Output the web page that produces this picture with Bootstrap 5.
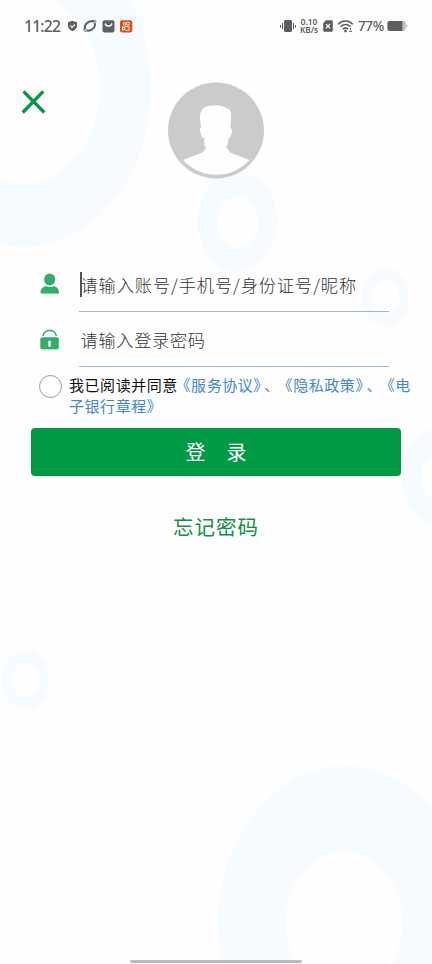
<!DOCTYPE html>
<html lang="zh-CN">
<head>
<meta charset="utf-8">
<meta name="viewport" content="width=device-width, initial-scale=1">
<title>登录</title>
<link rel="stylesheet" href="https://cdn.jsdelivr.net/npm/bootstrap@5.3.0/dist/css/bootstrap.min.css">
<style>
  body { font-family: "Noto Sans", "Noto Sans CJK SC", sans-serif; background: #fefefe; }
  svg { display: block; flex: none; }
  .screen { width: 432px; height: 964px; }
  .backdrop { z-index: 0; }
  .status { height: 52px; padding: 0 24px; color: #5d5d5d; font-family: "Noto Sans", sans-serif; }
  .clock { font-size: 15.6px; font-weight: 500; line-height: 20px; width: 43px; letter-spacing: -.75px; }
  .rate { font-size: 8.3px; line-height: 8px; width: 20px; font-weight: 600; margin-left: 3px; }
  .rate div { height: 8px; }
  .percent { font-size: 13.5px; font-weight: 500; line-height: 20px; width: 25px; letter-spacing: -.4px; }
  .hero { height: 206px; padding: 30px 0 0 20px; }
  .close-btn { margin-top: 6px; }
  .avatar { margin-left: 120px; }
  .login { padding: 0 31px; }
  .field { height: 55px; padding: 0 12px 0 8px; }
  .field-box { margin-left: 18px; height: 57px; margin-top: -1px; }
  .field-input { font-family: "Noto Sans CJK SC", sans-serif; font-weight: 300; font-size: 17.2px; letter-spacing: .7px; height: 55px; padding: 0 0 0 1.5px; border: 0; border-bottom: 1px solid #9cb9ce; border-radius: 0; background: transparent; box-shadow: none; color: #333; outline: 0; }
  .field-input::placeholder { color: #333; opacity: 1; }
  .account { letter-spacing: .92px; }
  .caret { left: 1px; top: 15px; width: 1.5px; height: 25px; background: #555; }
  .agree { padding: 7px 0 0 8px; height: 60px; margin-right: -20px; }
  .agree-text { margin-left: 7px; font-family: "Noto Sans CJK SC", sans-serif; font-size: 15px; line-height: 20.5px; letter-spacing: .55px; color: #111; white-space: nowrap; text-spacing-trim: space-all; font-kerning: none; }
  .agree-text a { color: #4388ce; }
  .open-mark { margin-left: -2.3px; }
  .close-mark { letter-spacing: -4px; }
  .radio-ring { width: 23px; height: 23px; border: 1.5px solid #9b9b9b; margin: 0; background: #fff; }
  .submit { height: 48px; background: #009944; border: 0; border-radius: 4px; color: #fff; font-family: "Noto Sans CJK SC", sans-serif; font-size: 20px; padding: 0; line-height: 48px; gap: 21px; }
  .forgot { margin-top: 35px; color: #118f45; font-family: "Noto Sans CJK SC", sans-serif; font-size: 20.5px; letter-spacing: 1px; line-height: 30px; }
  .home-bar { width: 172px; height: 3px; background: #b9babb; margin-bottom: 1px; }
</style>
</head>
<body>
<div class="screen position-relative overflow-hidden d-flex flex-column">
  <svg class="backdrop position-absolute top-0 start-0" width="432" height="964" aria-hidden="true">
    <g fill="#f5fbff">
      <ellipse cx="24" cy="88" rx="127" ry="159"/><ellipse cx="237.3" cy="221.5" rx="40" ry="50"/><ellipse cx="385.5" cy="297" rx="23.5" ry="29.5"/><ellipse cx="442" cy="477" rx="40" ry="50"/><ellipse cx="25.5" cy="680" rx="23.5" ry="29.5"/><ellipse cx="344.500" cy="924" rx="126.500" ry="158"/>
    </g>
    <g fill="#fefefe">
      <ellipse cx="24" cy="88" rx="76" ry="96"/><ellipse cx="237.500" cy="222" rx="20.500" ry="26"/><ellipse cx="385.500" cy="297" rx="14" ry="17.500"/><ellipse cx="442" cy="477" rx="21" ry="26"/><ellipse cx="25.500" cy="680" rx="14" ry="17.500"/><ellipse cx="344" cy="923.500" rx="58.500" ry="73"/>
    </g>
  </svg>

  <header class="status position-relative d-flex align-items-center justify-content-between">
    <div class="d-flex align-items-center">
      <span class="clock">11:22</span>
      <svg width="11" height="12" viewBox="0 0 11 12"><path d="M5.500 .8 10 2.300V6c0 2.500-2 4-4.500 5.200C3 10 1 8.500 1 6V2.300Z" fill="#606060"/><path d="m3.300 5.700 1.700 1.700 3-3.100" fill="none" stroke="#fff" stroke-width="1.100"/></svg>
      <svg class="ms-1" width="16" height="14" viewBox="0 0 16 14" fill="none" stroke="#606060"><path d="M3 10.500C1.500 6 6 1 12.300 2.500" stroke-width="2"/><path d="M12.500 3.700C14.500 8 9 13 4 11.300" stroke-width="1.900"/><path d="M9 2.100C12 .8 14.300 1.400 14 3.200M2.600 9.500C1.400 11 1.700 12.600 3.800 12.400" stroke-width="1"/></svg>
      <svg class="ms-1" width="13" height="13" viewBox="0 0 13 13"><rect x=".5" y=".3" width="12" height="12.200" rx="2" fill="#5f5f62"/><path d="M3 3.500c1 3.500 6 3.500 7 0" fill="none" stroke="#fff" stroke-width="1.400"/></svg>
      <svg class="ms-1" width="14" height="13" viewBox="0 0 14 13"><rect x="1" y=".3" width="12.300" height="12.200" rx="2" fill="#e84b16"/><g fill="none" stroke="#fff"><circle cx="5.700" cy="3.900" r="1.300"/><circle cx="8.900" cy="3.700" r="1.500"/><rect x="5.700" y="6.600" width="4.500" height="3.700" rx=".8"/><path d="m5.500 7.500-2-.8v3.400l2-.8"/></g></svg>
    </div>
    <div class="d-flex align-items-center">
      <svg width="16" height="14" viewBox="0 0 16 14" fill="#5d5d5d"><rect x="4" y="1" width="8" height="12" rx="1.500"/><path d="M2 4h1v6H2zM0 6h1v2.500H0zM13 4h1v6h-1zM15 6h1v2.500h-1z"/></svg>
      <div class="rate text-center"><div>0.10</div><div>KB/s</div></div>
      <svg class="ms-1" width="10" height="12" viewBox="0 0 10 12"><path d="M3 .2h5.500Q9.800.2 9.800 1.500v9q0 1.300-1.300 1.300h-7Q.2 11.800.2 10.500V3.300Z" fill="#5d5d5d"/><path d="m3 4.200 4 4m0-4-4 4" stroke="#fff" stroke-width="1.300"/></svg>
      <svg class="ms-1" width="17" height="14" viewBox="0 0 17 14" fill="none" stroke="#5d5d5d" stroke-width="1.600"><path d="M1.200 5.200c4-4.200 10.600-4.200 14.600 0M3.500 7.700c3-3 7-3 10 0M5.800 10.200c1.800-1.700 3.600-1.700 5.400 0"/><circle cx="8.500" cy="12" r=".6"/><path d="M12 12.300h3M13.500 9v2" stroke-width="1"/></svg>
      <span class="percent ms-1">77%</span>
      <svg class="ms-1" width="21" height="12" viewBox="0 0 22 12"><rect x=".5" y=".7" width="19" height="10.600" rx="2.500" fill="#bdbdbd"/><path d="M3 .7h13v10.600H3Q.5 11.300.5 8.800V3.200Q.5.7 3 .7" fill="#5d5d5d"/><path d="M20 3.800q1.500 1 1.500 2.200T20 8.200" fill="#bdbdbd"/></svg>
    </div>
  </header>

  <section class="hero position-relative d-flex align-items-start">
    <button class="close-btn btn p-0 border-0" type="button" aria-label="关闭"><svg width="28" height="28" viewBox="0 0 28 28"><path d="M3.500 3.300 24.300 24.500M23.300 3.300 2.700 24.500" fill="none" stroke="#0b954a" stroke-width="3.300"/></svg></button>
    <svg class="avatar" width="96" height="97" viewBox="0 0 96 97">
      <circle cx="48" cy="48.500" r="48" fill="#cbcbcb"/>
      <path d="M15 78 34.500 70.500 38.500 65.500 36.500 64 36.200 56C34 56 32.500 53 32.300 49L31.800 46.500 33 46 31.900 36C31.800 26 37 23.200 48 23.200 53 23.200 57 24.500 59 26.500 63 27 63.300 31 63.100 37L62.500 46.200 64 47.500C64 52 62.500 55.500 60.500 56.500L59.500 63.500 57.700 65.500 60 67 62 70.500 81.500 78A44.900 44.900 0 0 1 15 78Z" fill="#fefefe"/>
    </svg>
  </section>

  <main class="login position-relative">
    <form>
      <div class="field d-flex">
        <svg class="align-self-center" width="22" height="25" viewBox="0 0 22 25"><ellipse cx="11" cy="20.500" rx="9" ry="2.500" fill="#dff5e9"/><ellipse cx="10.700" cy="6.500" rx="5.600" ry="6" fill="#35ad68"/><path d="M1.500 19.500c0-4 3-6.200 6-6.200q3.300 1.200 6.600 0c3.500 0 5.900 2.700 5.900 6.200 0 1-1 1-1.500 1H3q-1.500 0-1.500-1" fill="#35ad68"/></svg>
        <div class="field-box position-relative flex-grow-1"><span class="caret position-absolute"></span><input class="field-input account form-control" type="text" aria-label="账号" placeholder="请输入账号/手机号/身份证号/昵称"></div>
      </div>
      <div class="field d-flex">
        <svg class="align-self-center" width="22" height="25" viewBox="0 0 22 25"><rect x="2" y="17" width="18" height="6" rx="2" fill="#dff5e9"/><path d="M4 8C5 .5 16.500 .5 17.300 8" fill="none" stroke="#35ad68" stroke-width="1.600"/><rect x="1.300" y="9.300" width="18.500" height="12" rx="1.800" fill="#35ad68"/><rect x="9.300" y="12.800" width="2.500" height="6" rx=".8" fill="#fff"/></svg>
        <div class="field-box flex-grow-1"><input class="field-input form-control" type="password" aria-label="密码" placeholder="请输入登录密码"></div>
      </div>
      <div class="agree d-flex align-items-start">
        <input class="radio-ring form-check-input flex-shrink-0" type="radio" aria-label="同意协议">
        <div class="agree-text">我已阅读并同意<a class="text-decoration-none open-mark" href="#">《服务协议<span class="close-mark">》</span>、</a><a class="text-decoration-none open-mark" href="#">《隐私政策<span class="close-mark">》</span>、</a><a class="text-decoration-none open-mark" href="#">《电<br>子银行章程》</a></div>
      </div>
      <button class="submit btn w-100 d-flex justify-content-center" type="button"><span>登</span><span>录</span></button>
    </form>
    <div class="text-center"><a class="forgot d-inline-block text-decoration-none" href="#">忘记密码</a></div>
  </main>
  <div class="home-bar position-relative rounded-pill mt-auto mx-auto"></div>
</div>
<script src="https://cdn.jsdelivr.net/npm/bootstrap@5.3.0/dist/js/bootstrap.bundle.min.js"></script>
</body>
</html>
